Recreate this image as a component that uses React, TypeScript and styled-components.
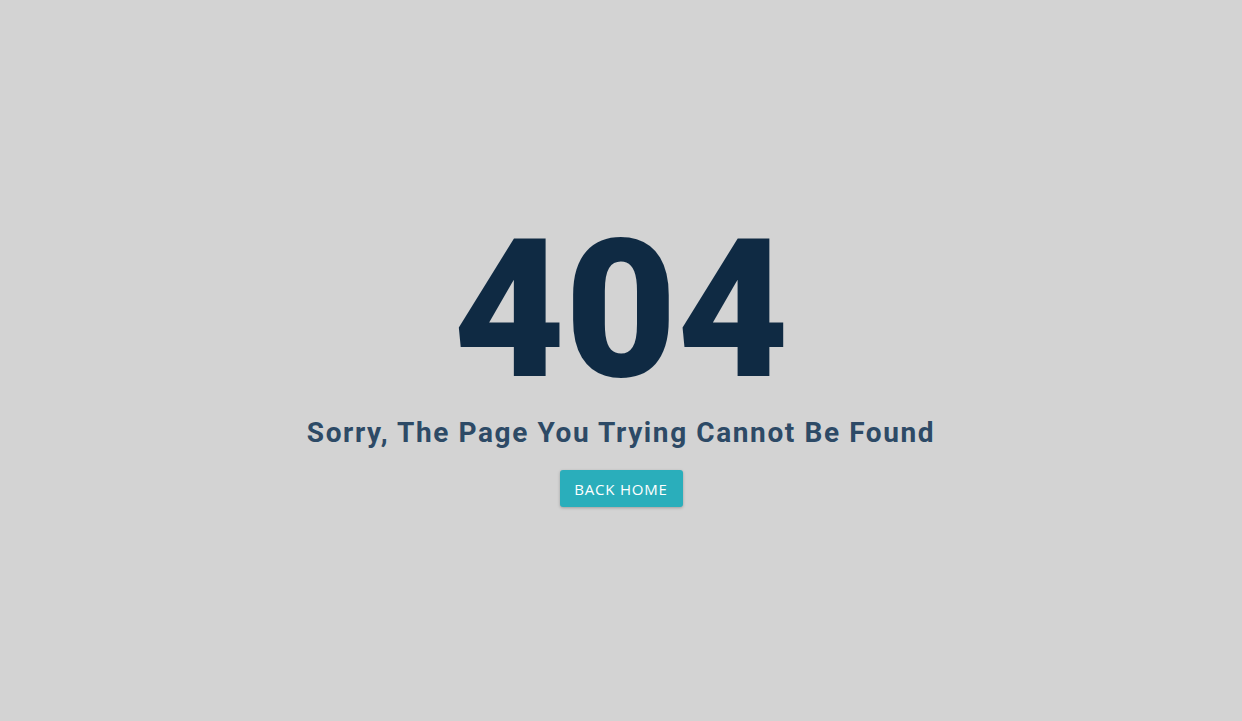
import React from "react";
import styled, { createGlobalStyle } from "styled-components";

const Global = createGlobalStyle`
  html, body { margin: 0; padding: 0; background: #d3d3d3; }
  #root { min-height: 100vh; }
`;

const Page = styled.div`
  min-height: 100vh;
  display: flex;
  flex-direction: column;
  align-items: center;
  justify-content: center;
  background: #d3d3d3;
  box-sizing: border-box;
`;

const Code = styled.h1`
  margin: 0;
  font-family: Roboto, "Liberation Sans", sans-serif;
  font-weight: 900;
  font-size: 193px;
  line-height: 1;
  color: #0f2a43;
  letter-spacing: 0;
`;

const Message = styled.h2`
  margin: 9px 0 0;
  font-family: Roboto, "Liberation Sans", sans-serif;
  font-weight: 700;
  font-size: 28px;
  line-height: 1.2;
  letter-spacing: 1.6px;
  color: #2d4a66;
`;

const Button = styled.a`
  margin-top: 21px;
  display: inline-flex;
  align-items: center;
  justify-content: center;
  width: 123px;
  height: 37px;
  box-sizing: border-box;
  background: #2aaebb;
  color: #ffffff;
  font-family: "Open Sans", "Liberation Sans", sans-serif;
  font-size: 15px;
  letter-spacing: 0.8px;
  text-transform: uppercase;
  text-decoration: none;
  border-radius: 3px;
  box-shadow: 0 1px 3px rgba(0, 0, 0, 0.25);
  cursor: pointer;
`;

export default function App() {
  return (
    <>
      <Global />
      <Page>
        <Code>404</Code>
        <Message>Sorry, The Page You Trying Cannot Be Found</Message>
        <Button href="#">Back Home</Button>
      </Page>
    </>
  );
}
